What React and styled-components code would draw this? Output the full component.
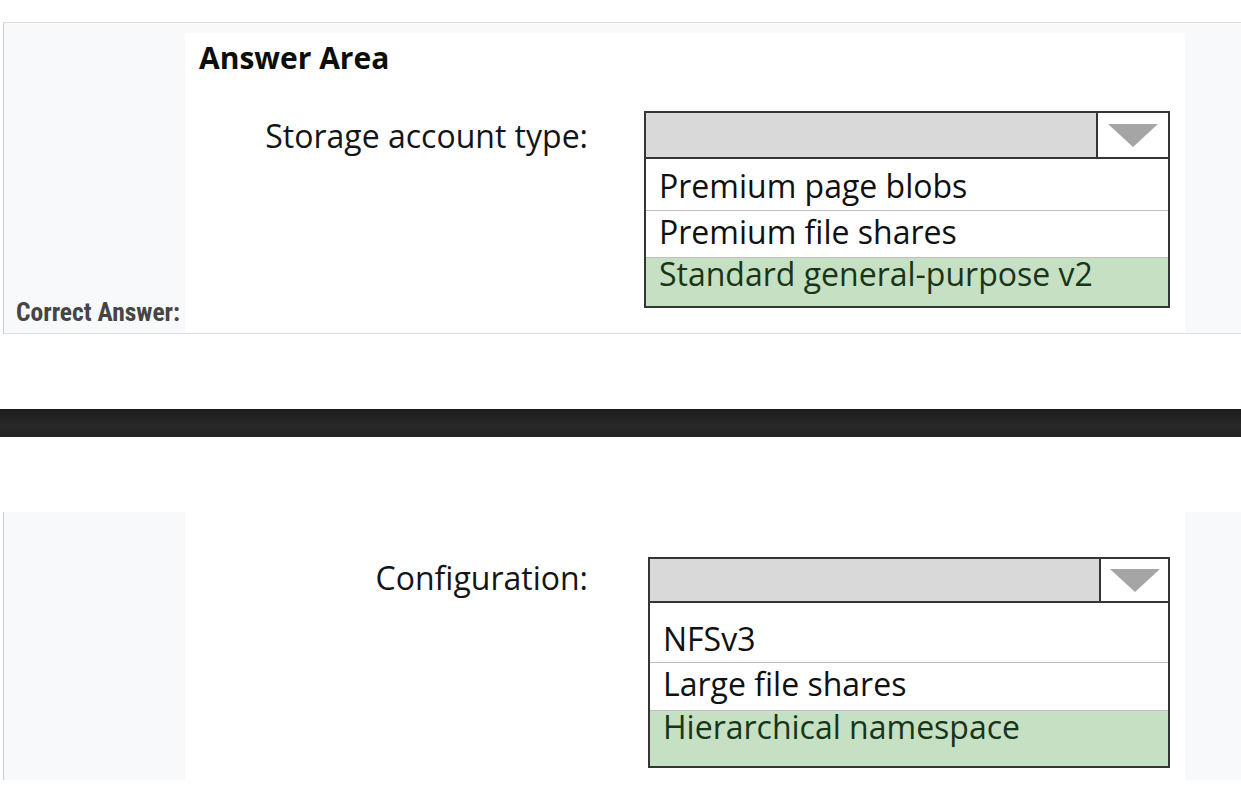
import React from 'react'
import styled, {createGlobalStyle, css} from 'styled-components'

const GlobalStyle = createGlobalStyle`
  html, body {
    margin: 0;
    padding: 0;
    background: #ffffff;
  }
  body {
    font-family: "Open Sans", "Noto Sans", sans-serif;
    color: #111;
    overflow: hidden;
  }
`;

const Page = styled.div`
  width: 1241px;
  height: 787px;
  padding-top: 22px;
  box-sizing: border-box;
  overflow: hidden;
`;

const Card = styled.section`
  display: flex;
  margin-left: 3px;
  background: #f8f9fa;
  border-left: 1px solid #cbced1;
  ${props => props.closed && css`
    border-top: 1px solid #dcdfe2;
    border-bottom: 1px solid #dcdfe2;
    padding-top: 10px;
  `}
  ${props => props.gap && css`
    margin-top: ${props.gap}px;
  `}
`;

const LabelColumn = styled.div`
  width: 181px;
  flex-shrink: 0;
  display: flex;
  align-items: flex-end;
`;

const CorrectLabel = styled.span`
  font-family: "Roboto Condensed", "Liberation Sans Narrow", "DejaVu Sans Condensed", sans-serif;
  font-weight: 700;
  font-size: 25.5px;
  line-height: 25px;
  color: #454545;
  padding: 0 0 8px 12px;
  white-space: nowrap;
`;

const AnswerPanel = styled.div`
  width: 1000px;
  height: ${props => props.height}px;
  flex-shrink: 0;
  background: #ffffff;
  box-sizing: border-box;
  padding-top: ${props => props.padTop}px;
`;

const Heading = styled.h2`
  margin: 0 0 38px 14px;
  font-size: 30px;
  line-height: 30px;
  font-weight: 700;
  color: #0d0d0d;
`;

const QuestionRow = styled.div`
  display: flex;
  align-items: flex-start;
`;

const FieldLabel = styled.div`
  width: 403px;
  flex-shrink: 0;
  text-align: right;
  font-size: 32px;
  line-height: 32px;
  color: #151515;
  margin-top: ${props => props.offset}px;
`;

const Dropdown = styled.div`
  margin-left: ${props => props.indent}px;
  width: ${props => props.width}px;
  box-sizing: border-box;
  border: 2px solid #353535;
  display: flex;
  flex-direction: column;
`;

const DropdownHeader = styled.div`
  display: flex;
  height: ${props => props.height}px;
  border-bottom: 2px solid #353535;
`;

const HeaderField = styled.div`
  flex: 1;
  background: #d9d9d9;
`;

const ArrowCell = styled.div`
  width: ${props => props.width}px;
  border-left: 2px solid #353535;
  background: #ffffff;
  display: flex;
  align-items: center;
  justify-content: center;
`;

const Option = styled.div`
  height: ${props => props.height}px;
  box-sizing: border-box;
  padding: ${props => props.padTop}px 0 0 13px;
  font-size: 32px;
  line-height: 32px;
  white-space: nowrap;
  color: #111;
  & + & {
    border-top: 1px solid #bfbfbf;
  }
  ${props => props.correct && css`
    background: #c6e0c4;
    color: #183518;
  `}
`;

const DarkBar = styled.div`
  height: 28px;
  margin-top: 75px;
  background: linear-gradient(#1c1c1c, #282828 60%, #242424);
`;

function Arrow() {
  return (
    <svg width="50" height="23" viewBox="0 0 50 23">
      <polygon points="0,0 50,0 25,23" fill="#a5a5a5" />
    </svg>
  )
}

function Select({indent, width, headerHeight, arrowWidth, options}) {
  return (
    <Dropdown indent={indent} width={width}>
      <DropdownHeader height={headerHeight}>
        <HeaderField />
        <ArrowCell width={arrowWidth}>
          <Arrow />
        </ArrowCell>
      </DropdownHeader>
      {options.map(opt => (
        <Option key={opt.text} height={opt.height} padTop={opt.padTop} correct={opt.correct}>
          {opt.text}
        </Option>
      ))}
    </Dropdown>
  )
}

const storageOptions = [
  {text: 'Premium page blobs', height: 51, padTop: 11},
  {text: 'Premium file shares', height: 47, padTop: 5},
  {text: 'Standard general-purpose v2', height: 49, padTop: 0, correct: true},
]

const configOptions = [
  {text: 'NFSv3', height: 59, padTop: 20},
  {text: 'Large file shares', height: 48, padTop: 5},
  {text: 'Hierarchical namespace', height: 56, padTop: 0, correct: true},
]

export default function App() {
  return (
    <>
      <GlobalStyle />
      <Page>
        <Card closed>
          <LabelColumn>
            <CorrectLabel>Correct Answer:</CorrectLabel>
          </LabelColumn>
          <AnswerPanel height={300} padTop={10}>
            <Heading>Answer Area</Heading>
            <QuestionRow>
              <FieldLabel offset={9}>Storage account type:</FieldLabel>
              <Select
                indent={56}
                width={526}
                headerHeight={44}
                arrowWidth={70}
                options={storageOptions}
              />
            </QuestionRow>
          </AnswerPanel>
        </Card>

        <DarkBar />

        <Card gap={75}>
          <LabelColumn />
          <AnswerPanel height={268} padTop={45}>
            <QuestionRow>
              <FieldLabel offset={5}>Configuration:</FieldLabel>
              <Select
                indent={60}
                width={522}
                headerHeight={42}
                arrowWidth={67}
                options={configOptions}
              />
            </QuestionRow>
          </AnswerPanel>
        </Card>
      </Page>
    </>
  )
}
